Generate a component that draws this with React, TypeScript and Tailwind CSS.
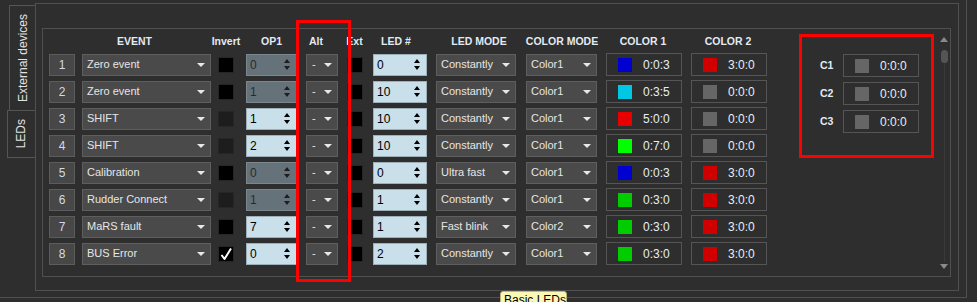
import React from 'react';

type Row = {
  n: number;
  event: string;
  invert: 'on' | 'off' | 'dim';
  op1: string;
  op1On: boolean;
  led: string;
  mode: string;
  colorMode: string;
  c1: string;
  c1v: string;
  c2: string;
  c2v: string;
};

const rows: Row[] = [
  { n: 1, event: 'Zero event', invert: 'off', op1: '0', op1On: false, led: '0', mode: 'Constantly', colorMode: 'Color1', c1: 'bg-[#0000d0]', c1v: '0:0:3', c2: 'bg-[#d00000]', c2v: '3:0:0' },
  { n: 2, event: 'Zero event', invert: 'off', op1: '1', op1On: false, led: '10', mode: 'Constantly', colorMode: 'Color1', c1: 'bg-[#00c8e4]', c1v: '0:3:5', c2: 'bg-[#666666]', c2v: '0:0:0' },
  { n: 3, event: 'SHIFT', invert: 'dim', op1: '1', op1On: true, led: '10', mode: 'Constantly', colorMode: 'Color1', c1: 'bg-[#e80000]', c1v: '5:0:0', c2: 'bg-[#666666]', c2v: '0:0:0' },
  { n: 4, event: 'SHIFT', invert: 'dim', op1: '2', op1On: true, led: '10', mode: 'Constantly', colorMode: 'Color1', c1: 'bg-[#00ff00]', c1v: '0:7:0', c2: 'bg-[#666666]', c2v: '0:0:0' },
  { n: 5, event: 'Calibration', invert: 'off', op1: '0', op1On: false, led: '0', mode: 'Ultra fast', colorMode: 'Color1', c1: 'bg-[#0000d0]', c1v: '0:0:3', c2: 'bg-[#d00000]', c2v: '3:0:0' },
  { n: 6, event: 'Rudder Connect', invert: 'dim', op1: '1', op1On: false, led: '1', mode: 'Constantly', colorMode: 'Color1', c1: 'bg-[#00cc00]', c1v: '0:3:0', c2: 'bg-[#d00000]', c2v: '3:0:0' },
  { n: 7, event: 'MaRS fault', invert: 'off', op1: '7', op1On: true, led: '1', mode: 'Fast blink', colorMode: 'Color2', c1: 'bg-[#00cc00]', c1v: '0:3:0', c2: 'bg-[#d00000]', c2v: '3:0:0' },
  { n: 8, event: 'BUS Error', invert: 'on', op1: '0', op1On: true, led: '2', mode: 'Constantly', colorMode: 'Color1', c1: 'bg-[#00cc00]', c1v: '0:3:0', c2: 'bg-[#d00000]', c2v: '3:0:0' },
];

const DownArrow = () => (
  <span className="h-0 w-0 border-x-[4px] border-t-[4px] border-x-transparent border-t-[#e8e8e8]" />
);

const Combo: React.FC<{ text: string; className: string }> = ({ text, className }) => (
  <div
    className={`flex h-[22px] items-center justify-between border border-[#5e5e5e] bg-[#4a4a4a] pl-[4px] pr-[5px] text-[11px] text-[#e6e6e6] ${className}`}
  >
    <span className="whitespace-nowrap">{text}</span>
    <DownArrow />
  </div>
);

const Spin: React.FC<{ value: string; on: boolean; className: string }> = ({ value, on, className }) => (
  <div
    className={`flex h-[22px] items-center justify-between border pl-[3px] pr-[6px] text-[12px] ${
      on ? 'border-[#9db0ba] bg-[#c9dfea] text-black' : 'border-[#7a878d] bg-[#65727a] text-[#2a2a2a]'
    } ${className}`}
  >
    <span>{value}</span>
    <span className="flex flex-col items-center gap-[3px]">
      <span
        className={`h-0 w-0 border-x-[3.5px] border-b-[4px] border-x-transparent ${
          on ? 'border-b-black' : 'border-b-[#1e1e1e]'
        }`}
      />
      <span
        className={`h-0 w-0 border-x-[3.5px] border-t-[4px] border-x-transparent ${
          on ? 'border-t-black' : 'border-t-[#1e1e1e]'
        }`}
      />
    </span>
  </div>
);

const Check: React.FC<{ state: 'on' | 'off' | 'dim'; className: string }> = ({ state, className }) => (
  <div
    className={`flex h-[16px] w-[16px] items-center justify-center border border-[#262626] ${
      state === 'dim' ? 'bg-[#1d1d1d]' : 'bg-black'
    } ${className}`}
  >
    {state === 'on' && (
      <svg width="14" height="14" viewBox="0 0 14 14">
        <path d="M2.5 8 L5.5 12 L12 1.5" fill="none" stroke="#ffffff" strokeWidth="2" strokeLinejoin="round" />
      </svg>
    )}
  </div>
);

const ColorBox: React.FC<{ swatch: string; value: string; className?: string }> = ({ swatch, value, className = '' }) => (
  <div className={`flex h-[23px] w-[76px] items-center border border-[#555555] pl-[11px] ${className}`}>
    <span className={`h-[14px] w-[14px] ${swatch}`} />
    <span className="ml-[11px] text-[12px] text-[#e6eef6]">{value}</span>
  </div>
);

const Header: React.FC<{ className: string; children: React.ReactNode }> = ({ className, children }) => (
  <div className={`flex justify-center whitespace-nowrap ${className}`}>{children}</div>
);

export default function App() {
  return (
    <div className="relative h-[302px] w-[977px] overflow-hidden bg-[#2e2e2e] font-['Liberation_Sans',Arial,sans-serif]">
      <div className="flex h-[298px] w-[967px] border-r border-b border-[#505050]">
        {/* side tabs */}
        <div className="flex w-[35px] flex-col items-end pt-[5px]">
          <div className="flex h-[105px] w-[26px] items-center justify-center border-t border-l border-[#555555]">
            <span className="rotate-180 whitespace-nowrap text-[12px] text-[#e2e2e2] [writing-mode:vertical-rl]">
              External devices
            </span>
          </div>
          <div className="flex h-[48px] w-[28px] items-center justify-center border-y border-l border-[#555555] pr-[1px]">
            <span className="rotate-180 whitespace-nowrap text-[12px] text-[#e2e2e2] [writing-mode:vertical-rl]">
              LEDs
            </span>
          </div>
        </div>

        {/* group box */}
        <div className="mt-[3px] h-[288px] w-[924px] border border-[#505050] pt-[24px] pr-[7px] pb-[13px] pl-[6px]">
          <div className="flex h-[249px] w-[909px] border border-[#505050] pl-[6px]">
            {/* table */}
            <div className="flex flex-col">
              <div className="mt-[6px] flex h-[13px] items-center text-[10.5px] font-bold text-[#e2eaf2]">
                <div className="w-[26px]" />
                <Header className="ml-[7px] w-[129px] pr-[24px]">EVENT</Header>
                <Header className="ml-[7px] w-[16px]">Invert</Header>
                <Header className="ml-[12px] w-[51px]">OP1</Header>
                <Header className="ml-[9px] w-[32px] pr-[12px]">Alt</Header>
                <Header className="ml-[9px] w-[15px]">Ext</Header>
                <Header className="ml-[10px] w-[54px] pr-[6px]">LED #</Header>
                <Header className="ml-[9px] w-[80px] pl-[8px]">LED MODE</Header>
                <Header className="ml-[10px] w-[71px] pl-[3px]">COLOR MODE</Header>
                <Header className="ml-[9px] w-[76px]">COLOR 1</Header>
                <Header className="ml-[9px] w-[76px]">COLOR 2</Header>
              </div>

              <div className="mt-[5px] flex flex-col gap-[4px]">
                {rows.map((r) => (
                  <div key={r.n} className="flex h-[23px] items-center">
                    <div className="flex h-[22px] w-[26px] items-center justify-center border border-[#5c5c5c] bg-[#474747] text-[12px] text-[#d2dce8]">
                      {r.n}
                    </div>
                    <Combo text={r.event} className="ml-[7px] w-[129px]" />
                    <Check state={r.invert} className="ml-[7px]" />
                    <Spin value={r.op1} on={r.op1On} className="ml-[12px] w-[51px]" />
                    <Combo text="-" className="ml-[9px] w-[32px] pl-[5px]" />
                    <Check state="off" className="ml-[9px] w-[15px]" />
                    <Spin value={r.led} on className="ml-[10px] w-[54px]" />
                    <Combo text={r.mode} className="ml-[9px] w-[80px]" />
                    <Combo text={r.colorMode} className="ml-[10px] w-[71px]" />
                    <ColorBox swatch={r.c1} value={r.c1v} className="ml-[9px]" />
                    <ColorBox swatch={r.c2} value={r.c2v} className="ml-[9px]" />
                  </div>
                ))}
              </div>
            </div>

            {/* C1..C3 panel */}
            <div className="mt-[5px] ml-[32px] flex h-[124px] w-[135px] flex-col gap-[5px] border-[3px] border-[#ff0000] pt-[17px] pl-[18px]">
              {['C1', 'C2', 'C3'].map((label) => (
                <div key={label} className="flex h-[23px] items-center">
                  <span className="w-[23px] text-[10.5px] font-bold text-[#e2eaf2]">{label}</span>
                  <ColorBox swatch="bg-[#666666]" value="0:0:0" className="w-[75px]" />
                </div>
              ))}
            </div>

            {/* scrollbar */}
            <div className="mr-[1px] ml-auto flex w-[10px] flex-col items-center pt-[8px] pb-[7px]">
              <span className="h-0 w-0 border-x-[4.5px] border-b-[5px] border-x-transparent border-b-[#8a8a8a]" />
              <span className="mt-[8px] h-[13px] w-[7px] rounded-full bg-[#555555]" />
              <span className="w-[1px] flex-1 bg-[#3a3a3a]" />
              <span className="mt-[2px] h-0 w-0 border-x-[4.5px] border-t-[5px] border-x-transparent border-t-[#8a8a8a]" />
            </div>
          </div>
        </div>
      </div>

      {/* annotation around Alt column */}
      <div className="pointer-events-none absolute top-[20px] left-[296px] h-[262px] w-[55px] border-[3px] border-[#ff0000]" />

      {/* tooltip */}
      <div className="absolute top-[291px] left-[500px] h-[22px] w-[67px] whitespace-nowrap rounded-[3px] border border-[#b9b47a] bg-[#fbf8b6] pt-[1px] pl-[3px] text-[12px] leading-[14px] text-black">
        Basic LEDs
      </div>
    </div>
  );
}
